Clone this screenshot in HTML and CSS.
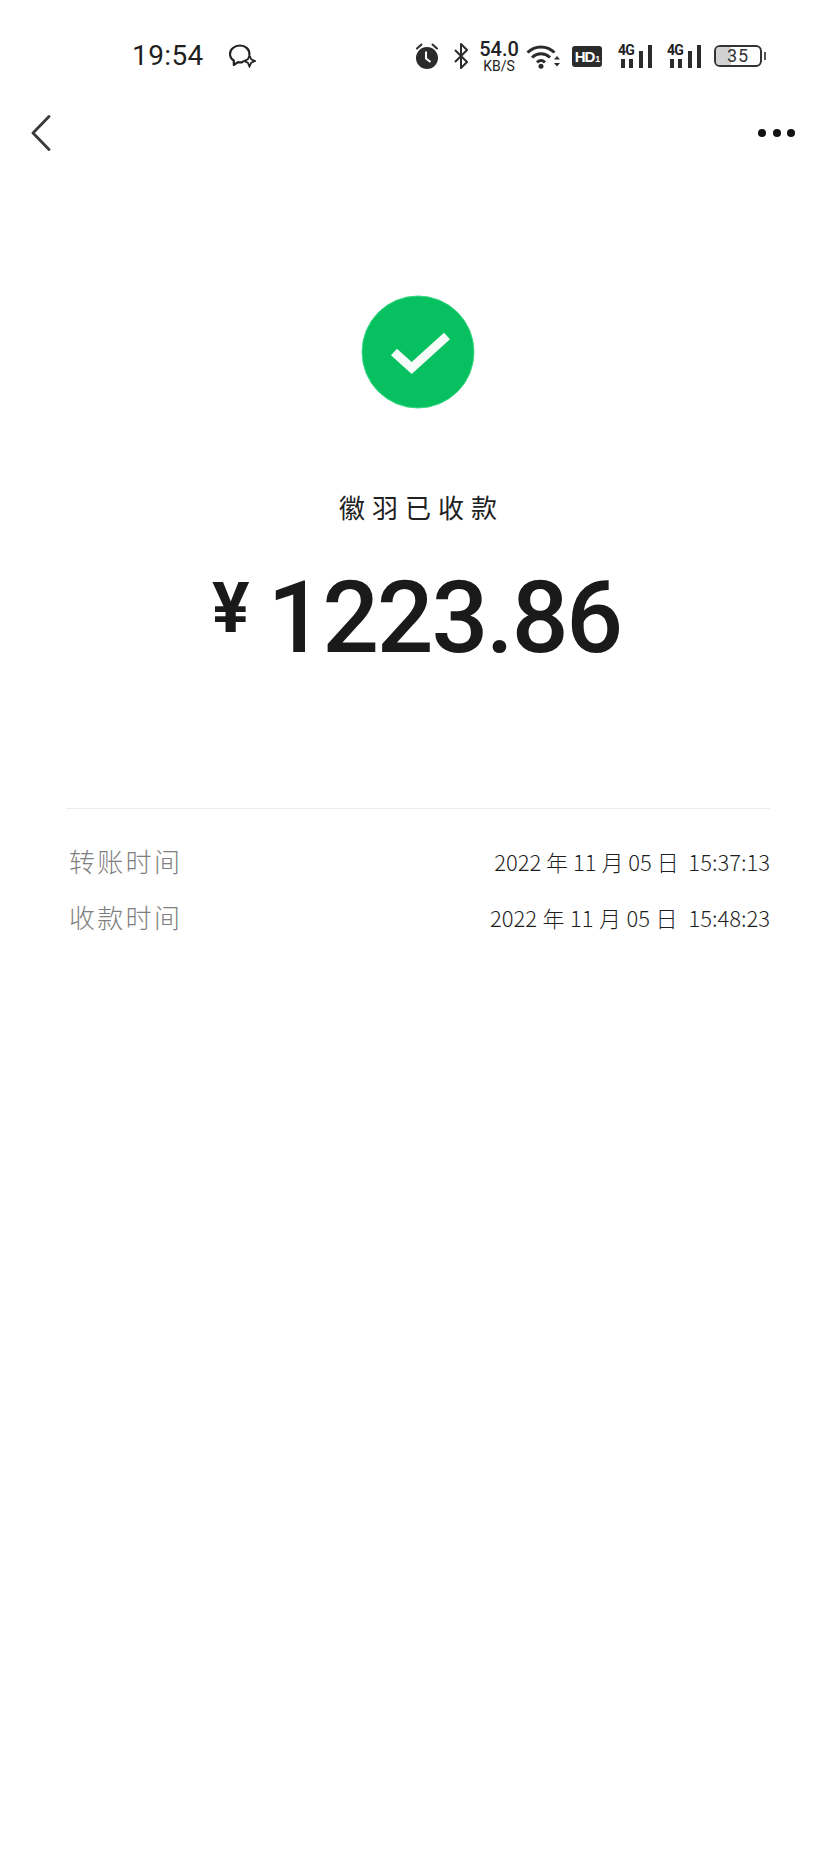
FILE: index.html
```html
<!DOCTYPE html>
<html lang="zh-CN">
<head>
<meta charset="utf-8">
<title>收款详情</title>
<link rel="stylesheet" href="styles.css">
</head>
<body>
<div class="page">
  <header class="status">
    <span class="time">19:54</span>
    <svg class="ic-msg" viewBox="0 0 28 24" width="28" height="24"><path d="M21.300 10.500C21.800 5.500 17.500 1.500 12 1.500 6.500 1.500 2 5.300 2 10c0 2.700 1.500 5 3.800 6.500V21l4.200-2.800c1.400.3 3 .3 4.500 0" fill="none" stroke="#222" stroke-width="2.200" stroke-linecap="round" stroke-linejoin="round"/><path d="M21.500 11.500l1.700 3.800 3.800 1.700-3.800 1.700-1.700 3.800-1.700-3.800-3.800-1.700 3.800-1.700z" fill="none" stroke="#222" stroke-width="1.800"/></svg>
    <div class="status-right">
      <svg class="ic-alarm" viewBox="0 0 24 26" width="24" height="26"><circle cx="12" cy="15" r="11" fill="#2b2b2b"/><path d="M11 8.500v7l4.500 3.500" fill="none" stroke="#fff" stroke-width="2"/><path d="M2 5.500L6.500 1.500M22 5.500L17.500 1.500" stroke="#2b2b2b" stroke-width="2" stroke-linecap="round"/></svg>
      <svg class="ic-bt" viewBox="0 0 17 26" width="17" height="26"><path d="M2 7l12 12-6 6V1l6 6L2 19" fill="none" stroke="#2b2b2b" stroke-width="2" stroke-linejoin="round"/></svg>
      <div class="speed"><span class="speed-num">54.0</span><span class="speed-unit">KB/S</span></div>
      <svg class="ic-wifi" viewBox="0 0 34 25" width="34" height="25"><path d="M1.500 8.500C9 1 21 1 28.500 8.500M6 13.500c5.500-5 12.500-5 18 0M11 18.300c2.500-2.300 5.500-2.300 8 0" fill="none" stroke="#2b2b2b" stroke-width="3"/><circle cx="15" cy="22.300" r="2.500" fill="#2b2b2b"/><path d="M28 15.500l3-3.500 3 3.500zM28 19l3 3.500 3-3.500z" fill="#2b2b2b"/></svg>
      <span class="hd">HD<small class="hd-sub">1</small></span>
      <div class="sig">
        <span class="sig-label">4G</span>
        <svg viewBox="0 0 36 24" width="36" height="24"><path d="M4 15h4v9H4zM12 15h4v9h-4zM22 7h4v17h-4zM31 1h4v23h-4z" fill="#2b2b2b"/></svg>
      </div>
      <div class="sig">
        <span class="sig-label">4G</span>
        <svg viewBox="0 0 36 24" width="36" height="24"><path d="M4 15h4v9H4zM12 15h4v9h-4zM22 7h4v17h-4zM31 1h4v23h-4z" fill="#2b2b2b"/></svg>
      </div>
      <div class="battery"><span class="battery-fill"></span><span class="battery-num">35</span></div>
      <span class="battery-nub"></span>
    </div>
  </header>

  <nav class="nav">
    <svg viewBox="0 0 20 36" width="20" height="36"><path d="M18 1.500L2 18l16 16.500" fill="none" stroke="#3a3a3a" stroke-width="2.800" stroke-linecap="round" stroke-linejoin="round"/></svg>
    <div class="dots"><i></i><i></i><i></i></div>
  </nav>

  <main class="main">
    <svg class="ok" viewBox="0 0 114 114" width="114" height="114"><circle cx="57" cy="57" r="56" fill="#07c160" stroke="#3bd884" stroke-width="1"/><path d="M33 57l17.700 16L86 41" fill="none" stroke="#f6fdf9" stroke-width="9"/></svg>
    <p class="who">徽羽已收款</p>
    <p class="amount"><span class="yen">¥</span><span class="num">1223.86</span></p>
    <section class="detail">
      <div class="row"><span class="key">转账时间</span><span class="val">2022 年 11 月 05 日&nbsp; 15:37:13</span></div>
      <div class="row"><span class="key">收款时间</span><span class="val val-wide">2022 年 11 月 05 日&nbsp; 15:48:23</span></div>
    </section>
  </main>
</div>
</body>
</html>
```
FILE: styles.css
```css
* { box-sizing: border-box; }
html, body { margin: 0; background: #fff; }
body { font-family: "Noto Sans CJK SC", "Noto Sans", sans-serif; color: #1a1a1a; }
.page { width: 836px; height: 1859px; overflow: hidden; }

.status { height: 112px; display: flex; align-items: center; padding: 0 70px 0 132px; }
.time { font: 400 28px/1 Roboto, sans-serif; letter-spacing: .4px; color: #1f1f1f; width: 96px; }
.ic-msg { display: block; }
.status-right { margin-left: auto; display: flex; align-items: center; height: 30px; }
.ic-alarm { display: block; margin-right: 14px; }
.ic-bt { display: block; margin-right: 9px; }
.speed { width: 40px; display: flex; flex-direction: column; align-items: center; font-family: Roboto, sans-serif; color: #222; margin-right: 7px; }
.speed-num { font-size: 20px; font-weight: 500; line-height: 20px; }
.speed-unit { font-size: 14px; font-weight: 400; line-height: 14px; }
.ic-wifi { display: block; margin-right: 12px; }
.hd { width: 30px; height: 21px; background: #2b2b2b; border-radius: 3px; color: #fff; font: 700 15px/21px "Liberation Sans", sans-serif; text-align: center; letter-spacing: -1px; margin-right: 15px; }
.hd-sub { font-size: 9px; margin-left: 1px; }
.sig { position: relative; width: 36px; height: 24px; margin-right: 13px; }
.sig svg { display: block; }
.sig-label { position: absolute; left: 1px; top: 0; font: 700 14px/12px Roboto, sans-serif; letter-spacing: -.8px; color: #222; }
.sig + .sig { margin-right: 12px; }
.battery { position: relative; width: 48px; height: 22px; border: 2px solid #333; border-radius: 6px; overflow: hidden; }
.battery-fill { position: absolute; left: 0; top: 0; bottom: 0; width: 15px; background: #d2d2d2; }
.battery-num { position: relative; display: block; text-align: center; font: 400 18px/18px Roboto, sans-serif; letter-spacing: 1px; color: #333; }
.battery-nub { width: 2px; height: 8px; margin-left: 2px; background: #555; }

.nav { height: 42px; display: flex; align-items: center; justify-content: space-between; padding: 0 41px 0 31px; }
.nav svg { display: block; }
.dots { display: flex; gap: 6.500px; }
.dots i { width: 8px; height: 8px; border-radius: 50%; background: #111; }

.main { display: flex; flex-direction: column; align-items: center; padding-top: 141px; }
.ok { display: block; }
.who { margin: 80px 0 0; font-size: 26px; line-height: 36px; letter-spacing: 7px; padding-left: 7px; font-weight: 400; color: #222; }
.amount { margin: 38px 0 0; display: flex; align-items: flex-start; height: 110px; width: 100%; justify-content: center; padding-right: 3px; }
.yen { font: 700 70px/1 Roboto, sans-serif; color: #1a1a1a; margin: 10px 18px 0 0; }
.num { font: 500 100px/110px Roboto, sans-serif; letter-spacing: -2.200px; color: #1a1a1a; }
.detail { align-self: stretch; margin: 135px 66px 0; border-top: 1px solid #ededed; padding-top: 34px; display: flex; flex-direction: column; gap: 20px; }
.row { display: flex; justify-content: space-between; align-items: center; height: 36px; padding-left: 3px; }
.key { font-size: 26px; line-height: 36px; letter-spacing: 2.300px; color: #7f7f7f; font-weight: 300; }
.val { font-size: 22px; line-height: 36px; color: #1f1f1f; font-weight: 300; }
.val-wide { word-spacing: .6px; }
```
